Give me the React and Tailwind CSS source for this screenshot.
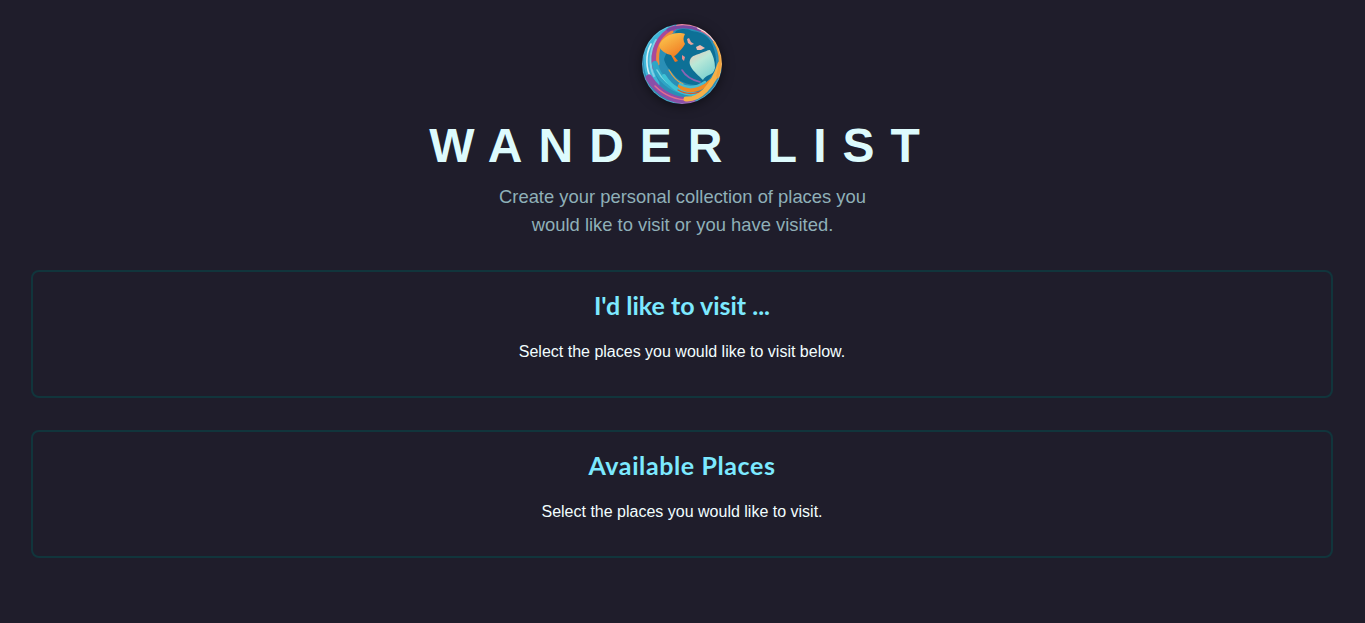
import React from "react";

// swirl bands of the globe: colour, width, path
const bands = [
  ["#3fb6d8", 9, "M22 4C6 18 1 40 13 60"],
  ["#d5f1f6", 1.6, "M9 20C3 31 4 45 9 54"],
  ["#7fd0e6", 2, "M14 16C7 28 7 42 12 52"],
  ["#a94a9a", 5, "M32 4C17 11 9 27 13 44"],
  ["#f0873a", 3, "M30 8C20 14 14 24 16 40"],
  ["#8a4fa8", 7, "M7 54C17 70 33 78 50 77"],
  ["#e56a8f", 1.6, "M13 62C23 72 35 76 47 76"],
  ["#2fa6c6", 6, "M13 40C16 54 28 65 44 68"],
  ["#7bd7e2", 1.5, "M15 46C20 56 29 63 40 66"],
  ["#3ec3d6", 4, "M22 52C29 63 40 71 56 70"],
  ["#ee8a26", 4.5, "M38 62C46 69 60 67 75 52"],
  ["#d9562c", 1.4, "M36 66C46 72 60 70 70 61"],
  ["#f4b04a", 5, "M44 75C58 76 71 62 78 40"],
  ["#e2708c", 4, "M36 2C50 0 66 6 74 18"],
  ["#7a4aa0", 3, "M26 6C38 1 50 3 58 6"],
  ["#f6d8d8", 1.6, "M56 4C64 7 72 14 76 24"],
  ["#f2a33a", 3.5, "M73 18C79 27 80 39 76 52"],
];

const Logo = () => (
  <svg viewBox="0 0 80 80" className="-ml-px w-20 h-20 drop-shadow-[0_2px_6px_rgba(0,0,0,0.5)]">
    <defs>
      <clipPath id="globe">
        <circle cx="40" cy="40" r="40" />
      </clipPath>
      <filter id="soft">
        <feGaussianBlur stdDeviation="0.35" />
      </filter>
      <linearGradient id="orange" x1="0.2" y1="0" x2="0.7" y2="1">
        <stop offset="0" stopColor="#fbc94f" />
        <stop offset="1" stopColor="#ef6f1c" />
      </linearGradient>
      <linearGradient id="land" x1="0" y1="0" x2="0.6" y2="1">
        <stop offset="0" stopColor="#f3c6b4" />
        <stop offset="0.45" stopColor="#b8e8d8" />
        <stop offset="1" stopColor="#7ed2d0" />
      </linearGradient>
    </defs>
    <g clipPath="url(#globe)">
      <g filter="url(#soft)">
        <rect width="80" height="80" fill="#2a8fb6" />
        {bands.map(([color, width, d]) => (
          <path key={d} d={d} fill="none" stroke={color} strokeWidth={width} strokeLinecap="round" />
        ))}
        {/* ocean */}
        <path d="M34 7C40 4 46 5 50 7C58 8 63 10 67 15C72 22 75 32 74 42C72 50 67 56 62 60C50 63 38 59 32 51C28 46 23 41 22 35C26 25 30 15 34 7Z" fill="#0f6f96" />
        {/* orange continent */}
        <path d="M24 13C29 9 38 8 43 10C41 13 41 17 43 20C41 24 38 26 36 29C34 31 33 32 32 32L36 37L33 38L29 31C24 30 19 27 17 22C18 18 21 15 24 13Z" fill="url(#orange)" />
        {/* pale continent */}
        <path d="M48 36C50 31 55 31 59 29C63 28 65 26 68 26C71 31 73 37 73 44C72 48 70 50 67 51C64 52 62 54 61 56C57 52 51 47 49 43C48 41 47 39 48 36Z" fill="url(#land)" />
        <path d="M45 15L47 14L49 18L52 20L49 21L46 19Z" fill="#e9a69c" />
        <path d="M54 23L58 21L63 24L59 26L55 26Z" fill="#f0bcae" />
        <path d="M40 31L43 33L42 37L40 35Z" fill="#e88f8f" />
        {/* streaks in the ocean */}
        <path d="M40 46C44 53 50 56 58 58" fill="none" stroke="#8c63b4" strokeWidth="1.6" strokeLinecap="round" />
        <path d="M27 46C31 53 36 58 41 60" fill="none" stroke="#f0a040" strokeWidth="1.2" strokeLinecap="round" />
        <path d="M38 60C46 65 54 64 63 58" fill="none" stroke="#4bbccf" strokeWidth="2.6" strokeLinecap="round" />
        <circle cx="40" cy="40" r="39.5" fill="none" stroke="#ffffff" strokeOpacity="0.2" />
      </g>
    </g>
  </svg>
);

const Section = ({ title, text, titleClass }) => (
  <section className="ml-[31px] mr-8 h-32 rounded-lg border-2 border-[#11353c] pt-[15px] text-center">
    <h2 className={`font-['Lato',sans-serif] text-[25px] font-bold leading-9 text-[#7ce9ff] ${titleClass}`}>{title}</h2>
    <p className="mt-[17px] text-base leading-6 text-[#f2fdff]">{text}</p>
  </section>
);

export default function App() {
  return (
    <div className="min-h-[623px] bg-[#1f1d2b] font-['Liberation_Sans',Arial,sans-serif]">
      <header className="flex flex-col items-center pt-6">
        <Logo />
        <h1 className="mt-3 whitespace-nowrap text-5xl font-bold leading-[60px] tracking-[16px] text-[#ddfbfd]">
          WANDER LIST
        </h1>
        <p className="mt-[7px] text-center text-[18.4px] leading-7 text-[#8fb0b8]">
          Create your personal collection of places you
          <br />
          would like to visit or you have visited.
        </p>
      </header>
      <main className="mt-[31px] flex flex-col gap-8">
        <Section title="I'd like to visit ..." text="Select the places you would like to visit below." titleClass="tracking-normal" />
        <Section title="Available Places" text="Select the places you would like to visit." titleClass="tracking-[0.6px]" />
      </main>
    </div>
  );
}
